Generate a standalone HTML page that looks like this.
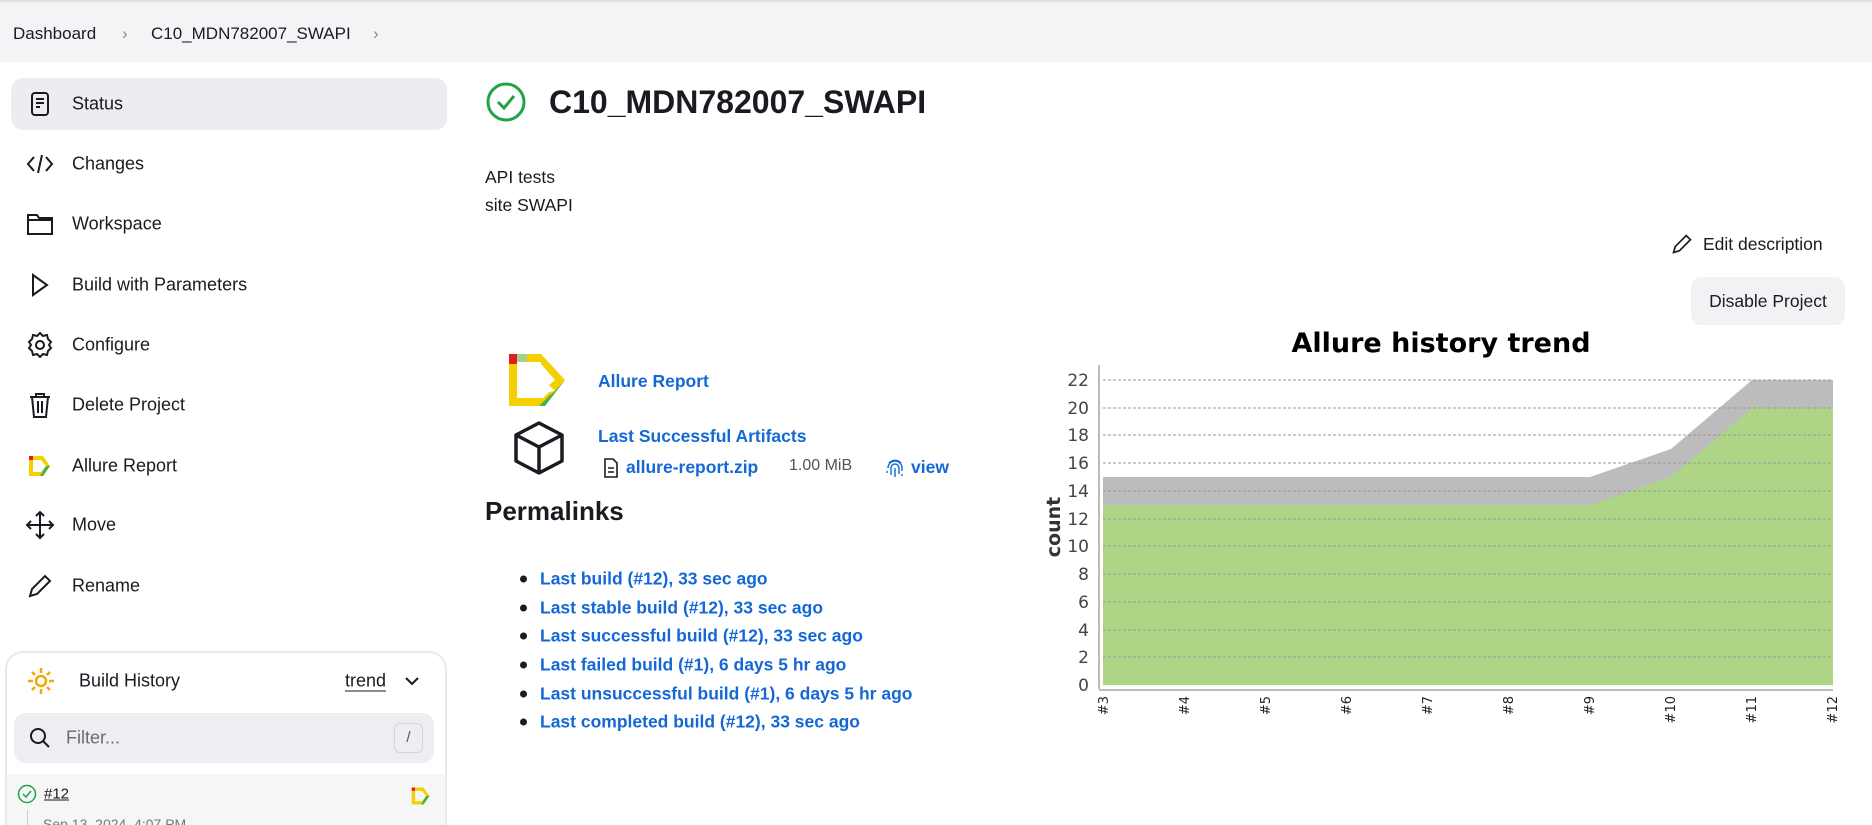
<!DOCTYPE html>
<html><head><meta charset="utf-8"><style>
*{box-sizing:border-box;margin:0;padding:0}
html,body{width:1872px;height:825px;overflow:hidden}
body{background:#fff;font-family:"Liberation Sans",sans-serif;color:#1a1a22;position:relative}
.abs{position:absolute}
.crumb{left:0;top:0;width:1872px;height:62px;background:#f4f4f6;border-top:2px solid #e2e2e4}
.crumb span{position:absolute;top:22px;font-size:17px}
.item{position:absolute;left:72px;font-size:18px;transform:translateY(-50%)}
.ic{position:absolute;transform:translate(-50%,-50%)}
a{color:#1468d6;text-decoration:none}
.pl{position:absolute;left:540px;font-size:17.5px;color:#1468d6;font-weight:bold;transform:translateY(-50%)}
.dot{position:absolute;left:520px;width:7px;height:7px;border-radius:50%;background:#1a1a22;transform:translateY(-50%)}
</style></head><body>
<div class="abs crumb"><span style="left:13px">Dashboard</span><span style="left:122px;color:#888">›</span><span style="left:151px">C10_MDN782007_SWAPI</span><span style="left:373px;color:#888">›</span></div>

<div class="abs" style="left:11px;top:78px;width:436px;height:52px;background:#ededf1;border-radius:12px"></div>
<svg class="ic" style="left:40px;top:104px" width="24" height="26" viewBox="0 0 24 26" fill="none" stroke="#1a1a22" stroke-width="2"><rect x="4" y="2" width="16" height="22" rx="3"/><path d="M8 8h8M8 12h8M8 16h4"/></svg>
<div class="item" style="top:104px">Status</div>
<svg class="ic" style="left:40px;top:164px" width="28" height="24" viewBox="0 0 28 24" fill="none" stroke="#1a1a22" stroke-width="2"><path d="M8 5l-6 7 6 7M20 5l6 7-6 7M16 3l-4 18"/></svg>
<div class="item" style="top:164px">Changes</div>
<svg class="ic" style="left:40px;top:224px" width="28" height="26" viewBox="0 0 28 26" fill="none" stroke="#1a1a22" stroke-width="2"><path d="M2 4h9l2 3h13v16H2zM2 9h24"/></svg>
<div class="item" style="top:224px">Workspace</div>
<svg class="ic" style="left:40px;top:285px" width="22" height="26" viewBox="0 0 22 26" fill="none" stroke="#1a1a22" stroke-width="2"><path d="M4 3l14 10-14 10z"/></svg>
<div class="item" style="top:285px">Build with Parameters</div>
<svg class="ic" style="left:40px;top:345px" width="28" height="28" viewBox="0 0 28 28" fill="none" stroke="#1a1a22" stroke-width="2"><circle cx="14" cy="14" r="4"/><path d="M14 2l3 3 4-1 1 4 3 3-2 3 2 3-3 3-1 4-4-1-3 3-3-3-4 1-1-4-3-3 2-3-2-3 3-3 1-4 4 1z"/></svg>
<div class="item" style="top:345px">Configure</div>
<svg class="ic" style="left:40px;top:405px" width="24" height="28" viewBox="0 0 24 28" fill="none" stroke="#1a1a22" stroke-width="2"><path d="M2 6h20M8 6V3h8v3M4 6l2 20h12l2-20M10 10v12M14 10v12"/></svg>
<div class="item" style="top:405px">Delete Project</div>
<svg class="ic" style="left:40px;top:466px" width="26" height="24" viewBox="0 0 26 24"><rect x="2" y="2" width="4" height="4" fill="#e01b24"/><rect x="2" y="6" width="4" height="16" fill="#f5d000"/><rect x="6" y="2" width="10" height="4" fill="#f5d000"/><path d="M16 2l7 10-7 10H6v-4h8l5-6-5-6" fill="#f5d000"/><path d="M19 12l4 0-7 10h-3z" fill="#4caf50"/></svg>
<div class="item" style="top:466px">Allure Report</div>
<svg class="ic" style="left:40px;top:525px" width="30" height="30" viewBox="0 0 30 30" fill="none" stroke="#1a1a22" stroke-width="2"><path d="M15 2v26M2 15h26M11 6l4-4 4 4M11 24l4 4 4-4M6 11l-4 4 4 4M24 11l4 4-4 4"/></svg>
<div class="item" style="top:525px">Move</div>
<svg class="ic" style="left:40px;top:586px" width="26" height="26" viewBox="0 0 26 26" fill="none" stroke="#1a1a22" stroke-width="2"><path d="M3 23l2-7L18 3l5 5L10 21z"/></svg>
<div class="item" style="top:586px">Rename</div>

<div class="abs" style="left:5px;top:651px;width:442px;height:174px;border:2px solid #e8e8ee;border-bottom:none;border-radius:18px 18px 0 0;background:#fff;overflow:hidden">
<div class="abs" style="left:0;top:121px;width:440px;height:60px;background:#f6f6f7"></div>
<div class="abs" style="left:20px;top:157px;width:1px;height:20px;background:#ccc"></div>
<div class="abs" style="left:36px;top:163px;font-size:14px;color:#777">Sep 13, 2024, 4:07 PM</div>
</div>
<svg class="ic" style="left:41px;top:681px" width="30" height="30" viewBox="0 0 30 30" fill="none" stroke="#f5a800" stroke-width="2.5"><circle cx="15" cy="15" r="5"/><path d="M15 2v5M15 23v5M2 15h5M23 15h5M6 6l3 3M21 21l3 3M24 6l-3 3M9 21l-3 3"/></svg>
<div class="item" style="left:79px;top:681px">Build History</div>
<div class="item" style="left:345px;top:681px;border-bottom:1.5px solid #1a1a22;line-height:20px">trend</div>
<svg class="ic" style="left:412px;top:681px" width="16" height="10" viewBox="0 0 16 10" fill="none" stroke="#1a1a22" stroke-width="2"><path d="M2 2l6 6 6-6"/></svg>
<div class="abs" style="left:14px;top:713px;width:420px;height:50px;background:#ededf2;border-radius:12px"></div>
<svg class="ic" style="left:40px;top:738px" width="22" height="22" viewBox="0 0 22 22" fill="none" stroke="#1a1a22" stroke-width="2"><circle cx="9" cy="9" r="7"/><path d="M14 14l6 6"/></svg>
<div class="item" style="left:66px;top:738px;color:#6b6b78">Filter...</div>
<div class="abs" style="left:394px;top:723px;width:29px;height:30px;border:1.5px solid #d4d4dc;border-radius:6px;font-size:15px;color:#555;text-align:center;line-height:27px">/</div>
<svg class="ic" style="left:27px;top:794px" width="20" height="20" viewBox="0 0 20 20" fill="none" stroke="#1ea446" stroke-width="1.5"><circle cx="10" cy="10" r="8.5"/><path d="M6 10l3 3 5-6"/></svg>
<div class="item" style="left:44px;top:794px;font-size:15px;text-decoration:underline">#12</div>
<svg class="ic" style="left:421px;top:796px" width="22" height="22" viewBox="0 0 26 24"><rect x="2" y="2" width="4" height="4" fill="#e01b24"/><rect x="2" y="6" width="4" height="16" fill="#f5d000"/><rect x="6" y="2" width="10" height="4" fill="#f5d000"/><path d="M16 2l7 10-7 10H6v-4h8l5-6-5-6" fill="#f5d000"/><path d="M19 12l4 0-7 10h-3z" fill="#4caf50"/></svg>

<svg class="ic" style="left:506px;top:102px" width="42" height="42" viewBox="0 0 42 42" fill="none" stroke="#1ea446" stroke-width="3"><circle cx="21" cy="21" r="18"/><path d="M13 21l6 6 10-12"/></svg>
<div class="abs" style="left:549px;top:84px;font-size:32px;font-weight:bold">C10_MDN782007_SWAPI</div>
<div class="abs" style="left:485px;top:167px;font-size:17.5px">API tests</div>
<div class="abs" style="left:485px;top:195px;font-size:17.5px">site SWAPI</div>
<svg class="ic" style="left:1682px;top:244px" width="22" height="22" viewBox="0 0 26 26" fill="none" stroke="#1a1a22" stroke-width="2"><path d="M3 23l2-7L18 3l5 5L10 21z"/></svg>
<div class="abs" style="left:1703px;top:234px;font-size:17.5px">Edit description</div>
<div class="abs" style="left:1691px;top:277px;width:154px;height:48px;background:#f2f2f5;border-radius:10px;font-size:17.5px;text-align:center;line-height:48px">Disable Project</div>

<svg class="abs" style="left:507px;top:352px" width="62" height="56" viewBox="0 0 62 56"><rect x="2" y="2" width="8" height="10" fill="#e01b24"/><rect x="10" y="2" width="10" height="8" fill="#9fd08c"/><rect x="20" y="2" width="14" height="8" fill="#f5d000"/><rect x="2" y="12" width="8" height="42" fill="#f5d000"/><path d="M34 2l24 26-10 11-6-6 6-5-14-16z" fill="#f5d000"/><path d="M48 39l10-11 0 0-20 26H10v-8h26l6-6z" fill="#f5d000"/><path d="M42 44l6-5 10-11-20 26h-6z" fill="#4caf50"/></svg>
<a class="abs" style="left:598px;top:371px;font-size:17.5px;font-weight:bold">Allure Report</a>
<svg class="abs" style="left:511px;top:420px" width="56" height="56" viewBox="0 0 56 56" fill="none" stroke="#1a1a22" stroke-width="3.5" stroke-linejoin="round"><path d="M28 3l23 12v26L28 53 5 41V15zM5 15l23 12 23-12M28 27v26"/></svg>
<a class="abs" style="left:598px;top:426px;font-size:17.5px;font-weight:bold">Last Successful Artifacts</a>
<svg class="abs" style="left:603px;top:458px" width="16" height="20" viewBox="0 0 16 20" fill="none" stroke="#1a1a22" stroke-width="1.6"><path d="M2 1h8l4 4v14H2zM5 10h6M5 14h6"/></svg>
<a class="abs" style="left:626px;top:457px;font-size:17.5px;font-weight:bold">allure-report.zip</a>
<div class="abs" style="left:789px;top:457px;font-size:16px;color:#555">1.00 MiB</div>
<svg class="abs" style="left:885px;top:457px" width="20" height="22" viewBox="0 0 20 22" fill="none" stroke="#1468d6" stroke-width="1.4"><path d="M4 6a8 8 0 0 1 12 0M3 11a7 7 0 0 1 14 0v3M6 18v-7a4 4 0 0 1 8 0v6M10 11v9M2 14v2M17 17v2"/></svg>
<a class="abs" style="left:911px;top:457px;font-size:17.5px;font-weight:bold">view</a>
<div class="abs" style="left:485px;top:496px;font-size:26px;font-weight:bold">Permalinks</div>
<div class="dot" style="top:579px"></div><div class="pl" style="top:579px">Last build (#12), 33 sec ago</div>
<div class="dot" style="top:608px"></div><div class="pl" style="top:608px">Last stable build (#12), 33 sec ago</div>
<div class="dot" style="top:636px"></div><div class="pl" style="top:636px">Last successful build (#12), 33 sec ago</div>
<div class="dot" style="top:665px"></div><div class="pl" style="top:665px">Last failed build (#1), 6 days 5 hr ago</div>
<div class="dot" style="top:694px"></div><div class="pl" style="top:694px">Last unsuccessful build (#1), 6 days 5 hr ago</div>
<div class="dot" style="top:722px"></div><div class="pl" style="top:722px">Last completed build (#12), 33 sec ago</div>

<svg class="abs" style="left:1030px;top:320px" width="842" height="430" viewBox="1030 320 842 430" font-family="DejaVu Sans, sans-serif">
<text x="1441" y="352" text-anchor="middle" font-size="27" font-weight="bold" fill="#000">Allure history trend</text>
<polygon fill="#bcbcbc" points="1103,477 1590,477 1671,449 1752,380 1833,380 1833,685 1103,685"/>
<polygon fill="#aed585" points="1103,505 1590,505 1671,477 1752,408 1833,408 1833,685 1103,685"/>
<g stroke="#999" stroke-width="1" stroke-dasharray="3,2">
<line x1="1103" x2="1833" y1="380" y2="380"/><line x1="1103" x2="1833" y1="408" y2="408"/><line x1="1103" x2="1833" y1="435" y2="435"/><line x1="1103" x2="1833" y1="463" y2="463"/><line x1="1103" x2="1833" y1="491" y2="491"/><line x1="1103" x2="1833" y1="519" y2="519"/><line x1="1103" x2="1833" y1="546" y2="546"/><line x1="1103" x2="1833" y1="574" y2="574"/><line x1="1103" x2="1833" y1="602" y2="602"/><line x1="1103" x2="1833" y1="630" y2="630"/><line x1="1103" x2="1833" y1="657" y2="657"/></g>
<line x1="1099" y1="365" x2="1099" y2="689" stroke="#bbb" stroke-width="2"/>
<line x1="1099" y1="690" x2="1833" y2="690" stroke="#bbb" stroke-width="2"/>
<g font-size="17" fill="#444" text-anchor="end">
<text x="1089" y="386">22</text><text x="1089" y="414">20</text><text x="1089" y="441">18</text><text x="1089" y="469">16</text><text x="1089" y="497">14</text><text x="1089" y="525">12</text><text x="1089" y="552">10</text><text x="1089" y="580">8</text><text x="1089" y="608">6</text><text x="1089" y="636">4</text><text x="1089" y="663">2</text><text x="1089" y="691">0</text></g>
<text transform="translate(1060,527) rotate(-90)" text-anchor="middle" font-size="19" font-weight="bold" fill="#333">count</text>
<g font-size="13" fill="#222" text-anchor="end">
<text transform="translate(1108,696) rotate(-90)">#3</text><text transform="translate(1189,696) rotate(-90)">#4</text><text transform="translate(1270,696) rotate(-90)">#5</text><text transform="translate(1351,696) rotate(-90)">#6</text><text transform="translate(1432,696) rotate(-90)">#7</text><text transform="translate(1513,696) rotate(-90)">#8</text><text transform="translate(1594,696) rotate(-90)">#9</text><text transform="translate(1675,696) rotate(-90)">#10</text><text transform="translate(1756,696) rotate(-90)">#11</text><text transform="translate(1837,696) rotate(-90)">#12</text></g>
</svg>
</body></html>
